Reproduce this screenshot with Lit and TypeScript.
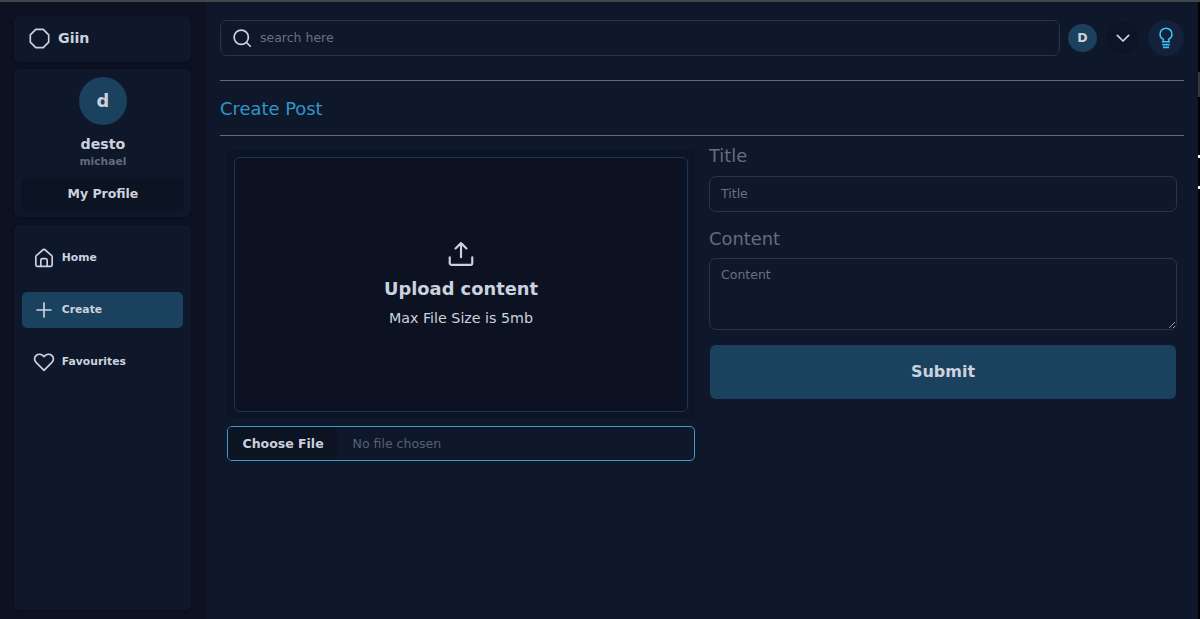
import { LitElement, html, css, svg } from "lit";
import { customElement } from "lit/decorators.js";

const icon = (size: number, body: unknown, width = 1.5) => html`<svg
  width=${size} height=${size} viewBox="0 0 24 24" fill="none" stroke="currentColor"
  stroke-width=${width} stroke-linecap="round" stroke-linejoin="round">${body}</svg>`;

const octagon = svg`<path d="M7.8 1.500h8.400L22.500 7.800v8.400L16.200 22.500H7.800L1.500 16.200V7.800z"/>`;
const home = svg`<path d="M2.200 10.300Q2.200 9.600 2.800 9.100L11.200 1.800a1.300 1.300 0 0 1 1.600 0l8.400 7.300q.6.500.6 1.200V20.200a1.800 1.800 0 0 1-1.800 1.800h-16a1.800 1.800 0 0 1-1.800-1.800z"/><path d="M8.200 22v-7.500A1.800 1.800 0 0 1 10 12.700h4a1.800 1.800 0 0 1 1.800 1.800V22"/>`;
const plus = svg`<path d="M12 3.500v17M3.500 12h17"/>`;
const heart = svg`<path d="M12 22 2.500 12.500C0 10 .100 6.200 2.600 4.200 5.300 2 9.300 2.400 12 5.500c2.700-3.100 6.700-3.500 9.400-1.300 2.500 2 2.600 5.800.1 8.300z"/>`;
const search = svg`<circle cx="11" cy="11" r="9.500"/><path d="m18 18 5 5"/>`;
const chevron = svg`<path d="m3.500 8 8.500 8.500L20.500 8"/>`;
const bulb = svg`<path d="M8.800 16.200v-2.700C6.300 12.300 4.800 10 4.800 7.400a7.200 7.200 0 0 1 14.400 0c0 2.600-1.500 4.900-4 6.100v2.700M7 16.500h10M7.500 19.900h9M8.300 23.200h7.400" stroke-linecap="butt"/>`;
const upload = svg`<path d="M12 15V2M7 6.900 12 1.900l5 5M1.600 15v5.500A1.500 1.500 0 0 0 3.100 22h17.800a1.500 1.500 0 0 0 1.500-1.500V15"/>`;

@customElement("app-root")
export class AppRoot extends LitElement {
  static styles = css`
    :host {
      display: block; position: relative; height: 619px; overflow: hidden;
      background: #0c1222; color: #cbd2de;
      font-family: "DejaVu Sans", sans-serif; font-size: 12.500px; line-height: 18px;
    }
    * { box-sizing: border-box; }
    svg { display: block; flex: none; overflow: visible; }
    .shell { display: grid; grid-template-columns: 206px 992px 2px; height: 100%; border-top: 2px solid #42444a; }
    .side { display: flex; flex-direction: column; padding: 14px 14.600px 9px 14.400px; }
    .card { background: #0f172a; border-radius: 6px; box-shadow: 0 1px 3px #090f1c; }
    .brand { display: flex; align-items: center; gap: 8px; height: 46px; padding: 0 0 2px 14.600px; font-size: 14.200px; font-weight: 700; }
    .profile { margin-top: 7px; height: 148px; display: flex; flex-direction: column; align-items: center; padding: 8px 7px 0; font-weight: 700; }
    .avatar { width: 48px; height: 48px; border-radius: 50%; background: #1a415d; display: grid; place-items: center; font-size: 17.800px; }
    .name { margin-top: 10px; font-size: 14.200px; }
    .surname { color: #636b7a; font-size: 10.700px; }
    .mine { align-self: stretch; margin-top: 6px; height: 34px; border-radius: 6px; background: #0c1323; display: grid; place-items: center; }
    .nav { margin-top: 8px; flex: 1; padding: 15px 8px; display: flex; flex-direction: column; gap: 16px; }
    .item { display: flex; align-items: center; gap: 8px; height: 36px; padding-left: 11.400px; border-radius: 5px; font-size: 10.800px; font-weight: 700; }
    .active { background: #1a415d; }
    .main { background: #0f172a; padding: 18px 14px 0; }
    .top { display: flex; align-items: center; height: 36px; }
    .search { width: 840px; height: 36px; border: 1px solid #2b3445; border-radius: 7px; display: flex; align-items: center; gap: 9px; padding-left: 12px; }
    .muted { color: #69717f; }
    .initial { width: 29px; height: 28px; margin-left: 8px; border-radius: 50%; background: #1a415d; display: grid; place-items: center; font-weight: 700; }
    .round { width: 32px; height: 32px; margin-left: 10px; border-radius: 50%; background: #0d1425; display: grid; place-items: center; }
    .lamp { width: 36px; height: 36px; margin-left: 9px; background: #13213a; color: #3abff0; }
    .heading { margin-top: 24px; height: 56px; padding-top: 1px; border: solid #626975; border-width: 1px 0; display: flex; align-items: center; font-size: 17.900px; color: #3196c8; }
    .columns { display: grid; grid-template-columns: 468px 468px; gap: 14px; padding: 14px 7px 0; }
    .drop { height: 268px; padding: 7px; background: #0d1425; }
    .frame { height: 255px; border: 1px solid #173852; border-radius: 6px; background: #0c1222; display: flex; flex-direction: column; align-items: center; padding-top: 83px; }
    .big { margin-top: 10px; font-size: 17.850px; font-weight: 700; line-height: 24px; }
    .limit { margin-top: 7px; font-size: 14.250px; line-height: 20px; }
    .file { margin-top: 8px; height: 35px; border: 1px solid #409bcb; border-radius: 5px; display: flex; align-items: center; overflow: hidden; color: #566174; }
    .choose { align-self: stretch; display: flex; align-items: center; padding: 0 13px 0 14.500px; margin-right: 16px; background: #0c1323; color: #cbd2de; font-weight: 700; }
    .form { display: flex; flex-direction: column; }
    .label { font-size: 17.850px; line-height: 24px; color: #656d7b; margin-top: -6px; }
    .field { width: 100%; margin: 8px 0 0; padding: 0 11px 1px; height: 36px; border: 1px solid #2b3445; border-radius: 7px; background: transparent; font: inherit; outline: none; color: #cbd2de; }
    .second { margin-top: 15px; }
    .field::placeholder { color: #69717f; opacity: 1; }
    .area { display: block; height: 72px; margin-top: 7px; padding: 7px 11px; resize: vertical; }
    .submit { margin: 15px 1px 0; height: 54px; padding-bottom: 2px; border: 0; border-radius: 6px; background: #1a415d; color: #cbd2de; font: 700 16px "DejaVu Sans", sans-serif; }
    .rail { background: #000; display: flex; flex-direction: column; }
    .thumb { margin-top: 70px; height: 25px; background: #36383c; }
    .mark { margin-top: 58px; height: 3px; background: #fff; }
    .mark + .mark { margin-top: 28px; }
  `;

  render() {
    return html`<div class="shell">
      <aside class="side">
        <div class="card brand">${icon(21, octagon, 1.9)}<span>Giin</span></div>
        <div class="card profile">
          <div class="avatar">d</div>
          <div class="name">desto</div>
          <div class="surname">michael</div>
          <div class="mine">My Profile</div>
        </div>
        <nav class="card nav">
          <div class="item">${icon(20, home, 2)}<span>Home</span></div>
          <div class="item active">${icon(20, plus, 2)}<span>Create</span></div>
          <div class="item">${icon(20, heart, 2)}<span>Favourites</span></div>
        </nav>
      </aside>
      <main class="main">
        <div class="top">
          <div class="search">${icon(18, search, 2.3)}<span class="muted">search here</span></div>
          <div class="initial">D</div>
          <div class="round">${icon(16, chevron, 2.6)}</div>
          <div class="round lamp">${icon(20, bulb, 1.9)}</div>
        </div>
        <div class="heading">Create Post</div>
        <div class="columns">
          <div>
            <div class="drop">
              <div class="frame">
                ${icon(26, upload, 2)}
                <div class="big">Upload content</div>
                <div class="limit">Max File Size is 5mb</div>
              </div>
            </div>
            <div class="file"><span class="choose">Choose File</span><span>No file chosen</span></div>
          </div>
          <div class="form">
            <div class="label">Title</div>
            <input class="field" placeholder="Title" />
            <div class="label second">Content</div>
            <textarea class="field area" placeholder="Content"></textarea>
            <button class="submit">Submit</button>
          </div>
        </div>
      </main>
      <div class="rail"><div class="thumb"></div><div class="mark"></div><div class="mark"></div></div>
    </div>`;
  }
}
